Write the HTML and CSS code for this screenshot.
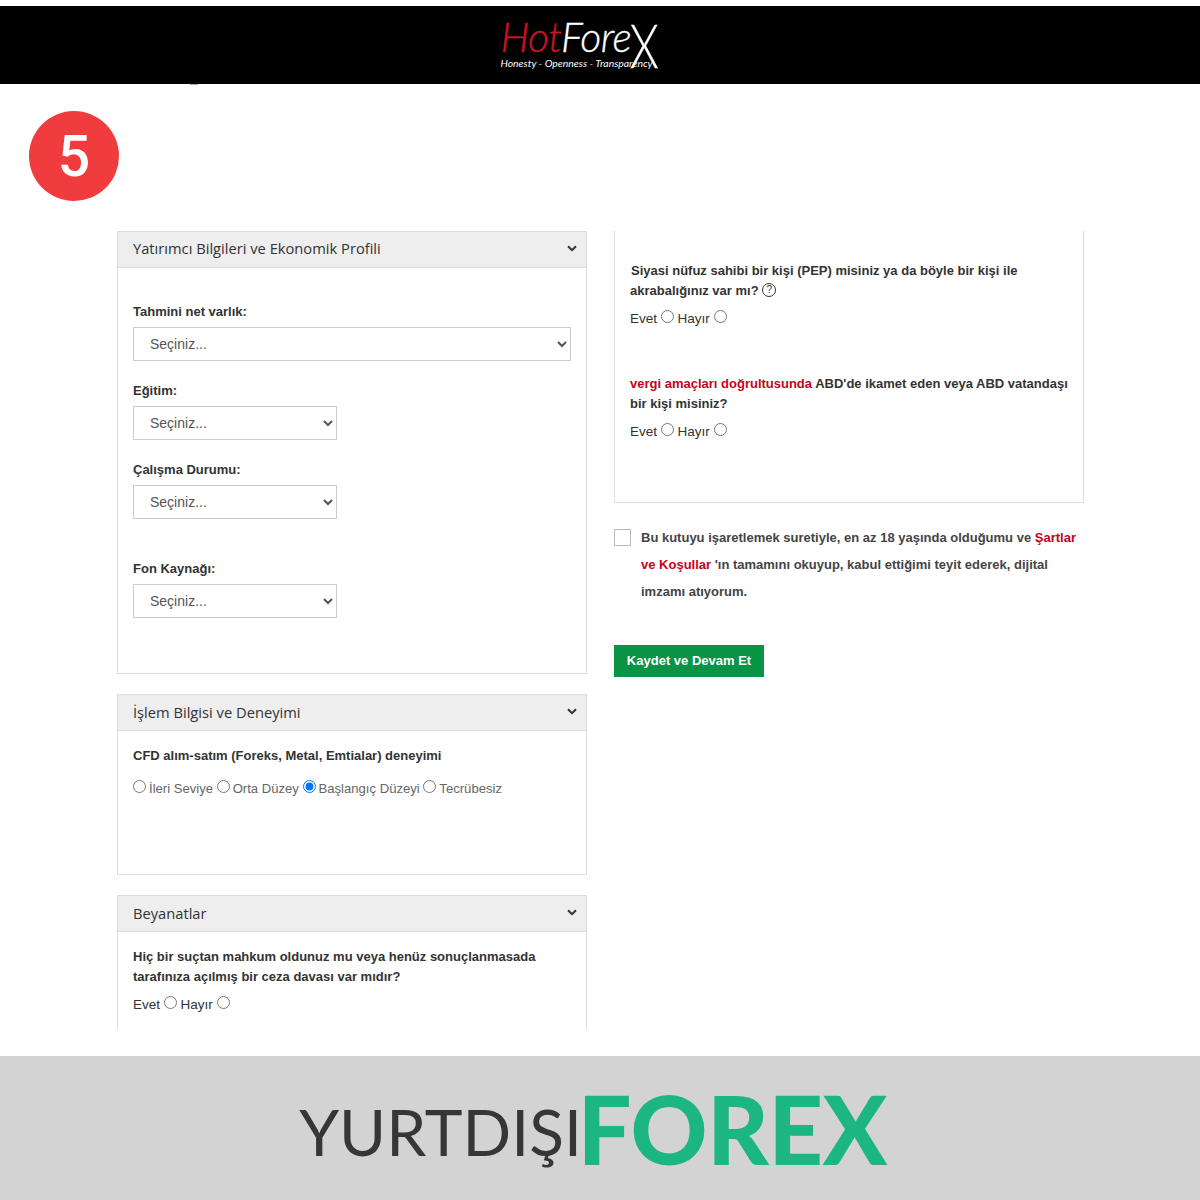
FILE: index.html
```html
<!doctype html>
<html>
<head>
<meta charset="utf-8">
<title>Yatırımcı Bilgileri</title>
<link rel="stylesheet" href="styles.css">
</head>

<body>
<div class="top">
	<div class="logo">
		<div class="logo-name"><span class="red">Hot</span>Fore<span class="logo-x">X</span></div>
		<div class="logo-tag">Honesty - Openness - Transparency</div>
	</div>
</div>

<div class="step">5</div>

<div class="cols">
	<div class="col">
		<div class="panel panel1">
			<div class="head">Yatırımcı Bilgileri ve Ekonomik Profili<svg class="chev" width="10" height="7" viewBox="0 0 10 7"><path d="M1 1.2l4 4 4-4" fill="none" stroke="#333" stroke-width="2"/></svg></div>
			<div class="body body1">
				<div class="field">
					<label class="lab">Tahmini net varlık:</label>
					<select class="sel"><option>Seçiniz...</option></select>
				</div>
				<div class="field">
					<label class="lab">Eğitim:</label>
					<select class="sel small"><option>Seçiniz...</option></select>
				</div>
				<div class="field">
					<label class="lab">Çalışma Durumu:</label>
					<select class="sel small"><option>Seçiniz...</option></select>
				</div>
				<div class="field far">
					<label class="lab">Fon Kaynağı:</label>
					<select class="sel small"><option>Seçiniz...</option></select>
				</div>
			</div>
		</div>

		<div class="panel panel2">
			<div class="head">İşlem Bilgisi ve Deneyimi<svg class="chev" width="10" height="7" viewBox="0 0 10 7"><path d="M1 1.2l4 4 4-4" fill="none" stroke="#333" stroke-width="2"/></svg></div>
			<div class="body body2">
				<div class="lab">CFD alım-satım (Foreks, Metal, Emtialar) deneyimi</div>
				<div class="radios grey">
					<input type="radio" name="d">İleri Seviye
					<input type="radio" name="d">Orta Düzey
					<input type="radio" name="d" checked>Başlangıç Düzeyi
					<input type="radio" name="d">Tecrübesiz
				</div>
			</div>
		</div>

		<div class="panel panel3">
			<div class="head">Beyanatlar<svg class="chev" width="10" height="7" viewBox="0 0 10 7"><path d="M1 1.2l4 4 4-4" fill="none" stroke="#333" stroke-width="2"/></svg></div>
			<div class="body body2">
				<div class="lab">Hiç bir suçtan mahkum oldunuz mu veya henüz sonuçlanmasada<br>tarafınıza açılmış bir ceza davası var mıdır?</div>
				<div class="radios">Evet <input type="radio" name="s"> Hayır <input type="radio" name="s"></div>
			</div>
		</div>
	</div>

	<div class="col">
		<div class="panel right">
			<div class="lab"><span class="nudge">Siyasi nüfuz sahibi bir kişi (PEP) misiniz ya da böyle bir kişi ile</span><br>akrabalığınız var mı? <span class="help">?</span></div>
			<div class="radios">Evet <input type="radio" name="p"> Hayır <input type="radio" name="p"></div>
			<div class="lab second"><span class="red">vergi amaçları doğrultusunda</span> ABD'de ikamet eden veya ABD vatandaşı<br>bir kişi misiniz?</div>
			<div class="radios">Evet <input type="radio" name="v"> Hayır <input type="radio" name="v"></div>
		</div>

		<div class="terms">
			<span class="box"></span>
			<div class="terms-text">Bu kutuyu işaretlemek suretiyle, en az 18 yaşında olduğumu ve <span class="red">Şartlar<br>ve Koşullar</span> 'ın tamamını okuyup, kabul ettiğimi teyit ederek, dijital<br>imzamı atıyorum.</div>
		</div>

		<button class="save">Kaydet ve Devam Et</button>
	</div>
</div>

<div class="foot"><span class="foot-a">YURTDIŞI</span><span class="foot-b">FOREX</span></div>
</body>
</html>
```

FILE: styles.css
```css
* {margin:0; padding:0; box-sizing:border-box;}

body {background:#fff; font-family:"Liberation Sans", Arial, sans-serif; font-size:13px; color:#333;}

.red {color:#c4041c;}

/* top bar */
.top {position:relative; margin-top:6px; height:78px; background:#000; display:flex; justify-content:center;}
.top::after {content:""; position:absolute; left:190px; top:78px; width:8px; height:1px; background:#aaa;}
.logo {position:relative; width:160px; margin-left:-39px; margin-top:10px; font-family:Lato, sans-serif; font-style:italic; color:#fff;}
.logo-name {font-size:41px; font-weight:300; line-height:41px; letter-spacing:-0.6px; white-space:nowrap; -webkit-text-stroke:0.3px;}
.logo-name .red {color:#d0102a;}
.logo-x {position:absolute; left:124px; top:-3px; font-size:62px; line-height:62px; font-style:normal; font-weight:300; transform:scaleX(.75);}
.logo-tag {font-size:10.4px; line-height:12px; margin-top:0; white-space:nowrap;}

/* step number */
.step {width:90px; height:90px; margin:27px 0 30px 29px; border-radius:50%; background:#f03c3f; color:#fff; font-family:Roboto, sans-serif; font-weight:500; font-size:57px; line-height:92px; text-align:center;}

.cols {display:grid; grid-template-columns:470px 470px; column-gap:27px; padding-left:117px; height:825px;}

/* panels */
.panel {border:1px solid #ddd; margin-bottom:20px;}
.panel1 {height:443px;}
.panel2 {height:181px;}
.panel3 {height:135px; border-bottom:0; margin-bottom:0;}
.head {position:relative; height:36px; background:#eee; border-bottom:1px solid #ddd; padding-left:15px; font-family:"Open Sans", sans-serif; font-size:14.7px; line-height:33px; color:#333;}
.panel2 .head, .panel3 .head {line-height:34px;}
.chev {position:absolute; right:9px; top:13px;}
.body {padding:0 15px;}
.body1 {padding-top:34px;}
.body2 {padding-top:15px;}

.lab {font-weight:700; line-height:20px; color:#333;}
.field {margin-bottom:20px;}
.field.far {margin-top:40px;}
.field .lab {display:block; margin-bottom:5px;}

.sel {display:block; width:100%; height:34px; padding-left:12px; border:1px solid #ccc; background:#fff; font-family:"Liberation Sans", Arial, sans-serif; font-size:14px; color:#555;}
.sel.small {width:204px;}

.radios {margin-top:8px; line-height:20px; font-size:13.5px;}
.radios.grey {margin-top:13px; font-size:13.1px; color:#666;}
.radios.grey input {margin-right:3px;}
.radios input {margin:0; width:13px; height:13px;}

/* right column */
.right {height:272px; border-top:0; padding:30px 15px 0; margin-bottom:26px;}
.nudge {margin-left:1px;}
.second {margin-top:45px;}
.help {display:inline-block; width:14px; height:14px; border:1px solid #333; border-radius:50%; font-size:10px; font-weight:400; line-height:12px; text-align:center; vertical-align:2px;}

.terms {display:flex; gap:10px;}
.box {flex:none; width:17px; height:17px; border:1px solid #bbb;}
.terms-text {font-weight:700; line-height:27px; color:#444; margin-top:-5px;}

.save {display:block; margin-top:40px; width:150px; height:32px; padding-bottom:1px; border:0; background:#089345; color:#fff; font-family:"Liberation Sans", Arial, sans-serif; font-size:13px; font-weight:700;}

/* footer */
.foot {height:144px; background:#d3d3d3; display:flex; justify-content:center; align-items:center; padding-right:14px; font-family:Lato, sans-serif; white-space:nowrap;}
.foot-a {margin-top:6px; font-size:64px; font-weight:400; color:#363636;}
.foot-b {margin-left:-4px; font-size:95px; font-weight:900; letter-spacing:-0.4px; color:#1cb682;}
```
